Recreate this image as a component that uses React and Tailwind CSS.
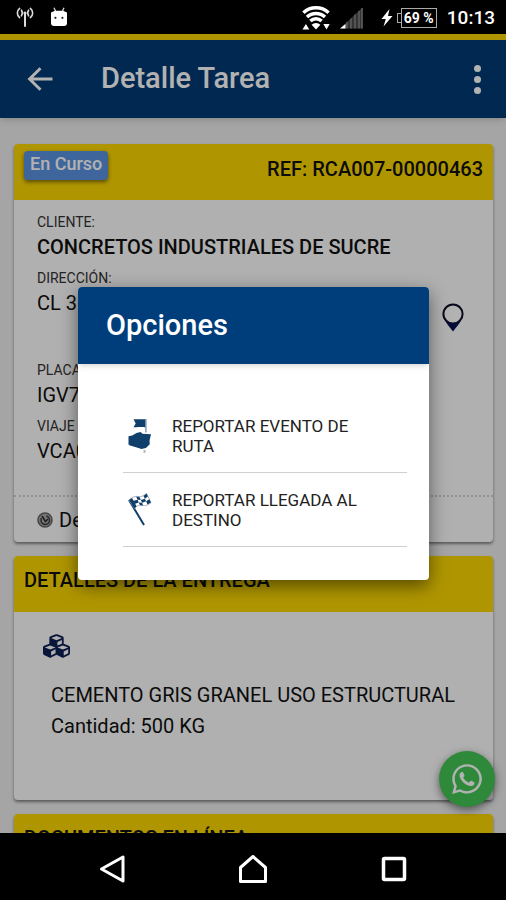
import React from "react";
import { FaCubes, FaWhatsapp } from "react-icons/fa";

function AntennaIcon() {
  return (
    <svg width="18" height="20" viewBox="0 0 18 20" fill="none" stroke="#dcdcdc" strokeWidth="1.6" strokeLinecap="round">
      <path d="M9 6.5V19" strokeWidth="2" />
      <circle cx="9" cy="6" r="1.6" fill="#dcdcdc" stroke="none" />
      <path d="M5.400 3.200c1 1.600 1 4 0 5.600M12.600 3.200c-1 1.600-1 4 0 5.600" />
      <path d="M3.600 1.400c-3 2.600-3 6.600 0 9.200M14.400 1.400c3 2.600 3 6.600 0 9.200" />
    </svg>
  );
}

function AndroidHeadIcon() {
  return (
    <svg width="18" height="20" viewBox="0 0 18 20">
      <path d="M4 .8l1.6 3.4M14 .8l-1.6 3.4" stroke="#d8d8d8" strokeWidth="1.3" />
      <path d="M1 5.5L5 3.8h8l4 1.7V16a3 3 0 0 1-3 3H4a3 3 0 0 1-3-3z" fill="#fff" />
      <circle cx="5.4" cy="10.8" r="1.1" fill="#222" />
      <circle cx="12.4" cy="10.8" r="1.1" fill="#222" />
    </svg>
  );
}

function WifiIcon() {
  return (
    <svg width="28" height="24" viewBox="0 0 28 24">
      <g fill="none" stroke="#fff" strokeWidth="3.5">
        <path d="M1.400 6.800a18.500 18.500 0 0 1 25.200 0" />
        <path d="M5 11a13 13 0 0 1 18 0" />
        <path d="M8.400 15a8 8 0 0 1 11.200 0" />
      </g>
      <path d="M9.600 18.800a6.400 6.400 0 0 1 8.800 0L14 23.600z" fill="#fff" />
      <path d="M.5 23.500h6.800l-3.400-5.500zM21.300 18h6.400l-3.200 5.500z" fill="#fff" />
    </svg>
  );
}

function SignalIcon() {
  return (
    <svg width="23" height="22" viewBox="0 0 23 22">
      <path d="M0 21.500L22.500.500v21z" fill="#343434" />
      <path d="M7 15v6.500M11 11.500v10M15 7.500v14M19 4v17.500M22 1v20.500" stroke="#5c5c5c" strokeWidth="1.600" />
      <path d="M0 21.500l5.500-4.500v4.500z" fill="#fff" />
    </svg>
  );
}

function BoltIcon() {
  return (
    <svg width="12" height="18" viewBox="0 0 12 18">
      <path d="M8.500 0L.500 10h4.300L2.500 17.500 11.500 7H7z" fill="#fff" />
    </svg>
  );
}

function BackArrowIcon() {
  return (
    <svg width="26" height="24" viewBox="0 0 26 24" fill="none" stroke="#fff" strokeWidth="3">
      <path d="M25.500 12H3M13.500 1.200L2.600 12l10.900 10.800" />
    </svg>
  );
}

function PinIcon() {
  return (
    <svg width="22" height="29" viewBox="0 0 22 29">
      <circle cx="11" cy="11" r="9.600" fill="#fff" stroke="#0b0f28" strokeWidth="2" />
      <path d="M3 17c4.500 4.400 11.500 4.400 16 0-1.500 4-5 7.500-8 11.500-3-4-6.500-7.500-8-11.500z" fill="#0a1050" />
    </svg>
  );
}

function SwirlIcon() {
  return (
    <svg width="16" height="16" viewBox="0 0 16 16" fill="none">
      <circle cx="8" cy="8" r="7" fill="#a8a8a8" stroke="#666" strokeWidth="1.600" />
      <path d="M9.500 4a4.300 4.300 0 1 1-5 2" stroke="#3c3c3c" strokeWidth="1.500" />
      <path d="M5 4l3.500 5.500L11 7" stroke="#2e2e2e" strokeWidth="1.600" />
    </svg>
  );
}

function RouteEventIcon() {
  return (
    <svg width="24" height="36" viewBox="0 0 24 36">
      <path d="M5.500 1.200h12.200v8.300c-4-1-8 .2-12.200-.3l2.200-3.700z" fill="#103f6b" />
      <path d="M17.900 1v13.500" stroke="#7d97b0" strokeWidth="1.400" />
      <path d="M.5 18.200l3.700-.6 4.300-2.700 4-.8 2 1.700 8.500.4-1.500 6.500.3 3.600-3.900 3.600-4.400 1-5.500-1.600-6-1.800-1.500-1z" fill="#103f6b" />
      <path d="M16.500 32v2.800" stroke="#a9b3bd" strokeWidth="2" />
    </svg>
  );
}

function CheckeredFlagIcon() {
  return (
    <svg width="24" height="34" viewBox="0 0 24 34">
      <path d="M1 7l15 25" stroke="#123f68" strokeWidth="2" />
      <path d="M1 7c3-3 6-4 9-3.500s6-.5 8.500-3l4.500 9c-3 3-6 3.500-9 2.800s-5 .2-7.500 3.200z" fill="#fff" stroke="#8095aa" strokeWidth=".7" />
      <path
        d="M1 7l3-2 1.600 2.800L3 10zM8.200 3.800l3.300.1 1.300 3-3.200-.2zM15.500 3l3-2.500 1.400 3-3 2.300zM5.600 7.800l4-1.100 1.200 2.700-3.700 1.300zM12.800 6.900l4.100-1.100 1.200 2.400-4 1.500zM3 10l2.600-2.200 1.500 2.900-2.400 2.300zM10.800 9.400l3.300.3.900 2.700-3-.1zM18.100 8.200l3.200-2 1.700 3.300-3.500 2zM4.700 13l2.400-2.300 1.500 2.600-2.100 2.200z"
        fill="#123f68"
      />
    </svg>
  );
}

const OPTIONS = [
  { label: "REPORTAR EVENTO DE RUTA", icon: RouteEventIcon },
  { label: "REPORTAR LLEGADA AL DESTINO", icon: CheckeredFlagIcon },
];

function StatusBar() {
  return (
    <div className="flex h-[34px] shrink-0 items-center justify-between bg-black pr-[11px] pl-4 text-white">
      <div className="flex items-center gap-4">
        <AntennaIcon />
        <AndroidHeadIcon />
      </div>
      <div className="flex items-center pt-0.5">
        <WifiIcon />
        <div className="ml-2.5">
          <SignalIcon />
        </div>
        <div className="ml-[18px]">
          <BoltIcon />
        </div>
        <div className="ml-1 flex items-center">
          <span className="h-2.5 w-1 border border-r-0 border-[#aaa]" />
          <span className="flex h-5 w-9 items-center justify-center border border-[#aaa] text-[14px] font-bold">
            69 %
          </span>
        </div>
        <span className="ml-2.5 text-[19px] font-medium">10:13</span>
      </div>
    </div>
  );
}

function Header() {
  return (
    <header className="relative flex h-[84px] shrink-0 items-center border-t-6 border-[#fbd500] bg-[#003a73] pr-5 pl-[27px] text-white shadow-md">
      <button type="button" aria-label="Volver">
        <BackArrowIcon />
      </button>
      <h1 className="ml-12 flex-1 text-[29px] font-medium">Detalle Tarea</h1>
      <button type="button" aria-label="Más" className="flex w-[18px] flex-col items-center gap-1">
        <span className="h-[7px] w-[7px] rounded-full bg-white" />
        <span className="h-[7px] w-[7px] rounded-full bg-white" />
        <span className="h-[7px] w-[7px] rounded-full bg-white" />
      </button>
    </header>
  );
}

function Field({ label, children }) {
  return (
    <div>
      <dt className="text-sm leading-[22px] text-[#333]">{label}</dt>
      <dd className="text-xl leading-7 text-[#111]">{children}</dd>
    </div>
  );
}

function Card({ header, children }) {
  return (
    <section className="shrink-0 overflow-hidden rounded bg-[#fcfcfc] shadow-[0_2px_3px_rgba(0,0,0,0.45)]">
      <div className="flex h-14 items-start justify-between bg-[#fbd700] px-2.5 text-xl font-medium text-[#111]">
        {header}
      </div>
      {children}
    </section>
  );
}

function OptionsDialog() {
  return (
    <div className="absolute inset-0 flex items-center justify-center bg-black/30 pr-[77px] pl-[78px]">
      <div
        role="dialog"
        aria-labelledby="options-title"
        className="w-full overflow-hidden rounded bg-white shadow-[0_6px_18px_rgba(0,0,0,0.5)]"
      >
        <div className="relative flex h-[77px] items-center bg-[#003e7b] px-7 shadow-md">
          <h2 id="options-title" className="text-[29px] font-medium text-white">
            Opciones
          </h2>
        </div>
        <ul className="pt-[35px] pr-[22px] pb-[33px] pl-[45px]">
          {OPTIONS.map(({ label, icon: Icon }) => (
            <li key={label} className="border-b border-[#cfcfcf]">
              <button type="button" className="flex h-[73px] w-full items-center gap-5 pr-6 pl-[5px] text-left">
                <span className="shrink-0">
                  <Icon />
                </span>
                <span className="text-[17px] leading-5 text-[#222]">{label}</span>
              </button>
            </li>
          ))}
        </ul>
      </div>
    </div>
  );
}

function NavBar() {
  return (
    <nav className="flex h-[67px] shrink-0 items-center justify-center gap-28 bg-black pt-1">
      <button type="button" aria-label="Atrás">
        <svg width="28" height="30" viewBox="0 0 28 30" fill="none" stroke="#fff" strokeWidth="3">
          <path d="M25 3v24L3.500 15z" strokeLinejoin="round" />
        </svg>
      </button>
      <button type="button" aria-label="Inicio">
        <svg width="30" height="30" viewBox="0 0 30 30" fill="none" stroke="#fff" strokeWidth="3">
          <path d="M2.500 27.500V13.500L15 2.500l12.500 11v14z" strokeLinejoin="round" />
        </svg>
      </button>
      <button type="button" aria-label="Recientes">
        <svg width="28" height="30" viewBox="0 0 28 30" fill="none" stroke="#fff" strokeWidth="3.500">
          <rect x="3.500" y="4.500" width="21" height="21" rx="1" />
        </svg>
      </button>
    </nav>
  );
}

export default function App() {
  return (
    <div className="flex h-screen flex-col overflow-hidden bg-black font-[Roboto,sans-serif] text-black">
      <StatusBar />

      <div className="relative flex min-h-0 flex-1 flex-col bg-[#ececec]">
        <Header />

        <main className="flex min-h-0 flex-1 flex-col gap-[14px] overflow-hidden pt-[26px] pr-[13px] pl-[14px]">
          {/* Task summary */}
          <Card
            header={
              <>
                <span className="mt-[7px] rounded bg-[#5b92e0] px-[6px] pt-px pb-1 text-lg leading-6 text-white shadow-[0_2px_4px_rgba(0,0,0,0.5)]">
                  En Curso
                </span>
                <span className="mt-[11px] leading-7">REF: RCA007-00000463</span>
              </>
            }
          >
            <dl className="flex flex-col gap-1.5 px-[23px] pt-[11px] pb-[30px]">
              <Field label="CLIENTE:">
                <strong className="font-medium">CONCRETOS INDUSTRIALES DE SUCRE</strong>
              </Field>
              <Field label="DIRECCIÓN:">
                <span className="flex h-16 items-start justify-between pr-1.5">
                  CL 3
                  <span className="mt-3.5">
                    <PinIcon />
                  </span>
                </span>
              </Field>
              <Field label="PLACA:">IGV7</Field>
              <Field label="VIAJE">VCA0</Field>
            </dl>
            <div className="flex h-[47px] items-center gap-1.5 border-t-2 border-dotted border-[#d0d0d0] px-[23px] text-xl text-[#111]">
              <SwirlIcon />
              Detalles
            </div>
          </Card>

          {/* Delivery details */}
          <Card header={<h2 className="mt-2.5 leading-7">DETALLES DE LA ENTREGA</h2>}>
            <div className="px-[29px] pt-5 pb-[58px]">
              <FaCubes className="h-7 w-[27px] text-[#0d1f52]" />
              <div className="mt-5 pl-2 text-xl leading-[31px] text-[#111]">
                <p>CEMENTO GRIS GRANEL USO ESTRUCTURAL</p>
                <p>Cantidad: 500 KG</p>
              </div>
            </div>
          </Card>

          {/* Online documents */}
          <Card header={<h2 className="mt-2.5 leading-7">DOCUMENTOS EN LÍNEA</h2>} />
        </main>

        <button
          type="button"
          aria-label="WhatsApp"
          className="absolute right-[11px] bottom-[26px] flex h-14 w-14 items-center justify-center rounded-full bg-[#42c653] text-white shadow-[0_3px_8px_rgba(0,0,0,0.5)]"
        >
          <FaWhatsapp className="h-[34px] w-[34px]" />
        </button>

        <OptionsDialog />
      </div>

      <NavBar />
    </div>
  );
}
